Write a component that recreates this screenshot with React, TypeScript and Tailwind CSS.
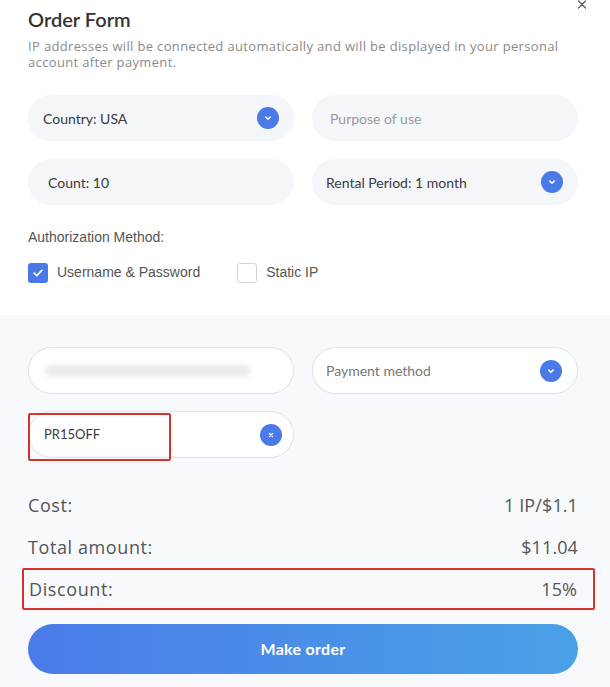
import React from "react";

const Chevron = () => (
  <span className="flex h-[22px] w-[22px] items-center justify-center rounded-full bg-[#4a79e8]">
    <svg width="10" height="10" viewBox="0 0 10 10" fill="none">
      <path d="M2.8 4 L5 6.2 L7.2 4" stroke="white" strokeWidth="1.6" strokeLinecap="round" strokeLinejoin="round" />
    </svg>
  </span>
);

const ClearIcon = () => (
  <span className="flex h-[22px] w-[22px] items-center justify-center rounded-full bg-[#4a79e8]">
    <svg width="10" height="10" viewBox="0 0 10 10" fill="none">
      <path d="M3.4 3.4 L6.6 6.6 M6.6 3.4 L3.4 6.6" stroke="white" strokeWidth="1.4" strokeLinecap="round" />
    </svg>
  </span>
);

export default function App() {
  const font = { fontFamily: "Lato, 'Noto Sans', sans-serif" };
  const arial = { fontFamily: "'Liberation Sans', Arial, sans-serif" };
  const open = { fontFamily: "'Open Sans', Lato, sans-serif" };
  return (
    <div className="w-[610px] h-[687px] bg-white overflow-hidden text-[#333]" style={font}>
      <div className="relative pl-[28px] pr-[32px] pt-[6px] pb-[32px]">
        <svg className="absolute right-[23px] top-[0px]" width="10" height="10" viewBox="0 0 10 10" fill="none">
          <path d="M1.5 1 L8.5 8 M8.5 1 L1.5 8" stroke="#555" strokeWidth="1.2" strokeLinecap="round" />
        </svg>
        <h1 className="text-[20px] font-semibold leading-[26px] text-[#333]">Order Form</h1>
        <p className="mt-[6px] text-[13px] leading-[16px] tracking-[0.35px] text-[#8a8a8a] pr-[10px]" style={open}>
          IP addresses will be connected automatically and will be displayed in your personal account after payment.
        </p>
        <div className="mt-[25px] grid grid-cols-2 gap-x-[18px] gap-y-[18px]">
          <div className="flex h-[46px] items-center justify-between rounded-full bg-[#f5f6fa] pl-[15px] pr-[15px] shadow-[0_0_3px_rgba(0,0,0,0.03)]">
            <span className="text-[14px] text-[#3a3a3a]">Country: USA</span>
            <Chevron />
          </div>
          <div className="flex h-[46px] items-center rounded-full bg-[#f5f6fa] pl-[18px]">
            <span className="text-[14px] text-[#9a9a9a]">Purpose of use</span>
          </div>
          <div className="flex h-[46px] items-center rounded-full bg-[#f5f6fa] pl-[20px]">
            <span className="text-[14px] text-[#3a3a3a]">Count: 10</span>
          </div>
          <div className="flex h-[46px] items-center justify-between rounded-full bg-[#f5f6fa] pl-[14px] pr-[15px]">
            <span className="text-[14px] text-[#3a3a3a]">Rental Period: 1 month</span>
            <Chevron />
          </div>
        </div>
        <div className="mt-[24px] text-[14px] leading-[16px] text-[#555]" style={arial}>
          Authorization Method:
        </div>
        <div className="mt-[17px] flex items-center text-[14px] text-[#555]" style={arial}>
          <span className="flex h-[20px] w-[20px] items-center justify-center rounded-[3px] bg-[#4a79e8]">
            <svg width="12" height="12" viewBox="0 0 12 12" fill="none">
              <path d="M2.2 6.2 L4.8 8.7 L9.8 3.4" stroke="white" strokeWidth="1.7" strokeLinecap="round" strokeLinejoin="round" />
            </svg>
          </span>
          <span className="ml-[9px]">Username &amp; Password</span>
          <span className="ml-[37px] h-[20px] w-[20px] rounded-[3px] border border-[#cfd2d8] bg-white" />
          <span className="ml-[9px]">Static IP</span>
        </div>
      </div>
      <div className="bg-[#f8f9fd] pl-[28px] pr-[32px] pt-[32px] pb-[20px]">
        <div className="grid grid-cols-2 gap-x-[18px] gap-y-[17px]">
          <div className="flex h-[47px] items-center rounded-full border border-[#dfe2e9] bg-white pl-[16px]">
            <span className="h-[12px] w-[206px] rounded-full bg-[#ececef] blur-[2px]" />
          </div>
          <div className="flex h-[47px] items-center justify-between rounded-full border border-[#dfe2e9] bg-white pl-[13px] pr-[15px]">
            <span className="text-[14px] text-[#777]">Payment method</span>
            <Chevron />
          </div>
          <div className="relative flex h-[47px] items-center justify-between rounded-full border border-[#dfe2e9] bg-white pl-[15px] pr-[11px]">
            <span className="text-[13px] text-[#3a3a3a]">PR15OFF</span>
            <ClearIcon />
            <span className="absolute left-[-1px] top-[1px] h-[48px] w-[143px] border-2 border-[#d9302b] rounded-[2px]" />
          </div>
        </div>
        <div className="mt-[35px] flex items-center justify-between text-[18px] leading-[24px] text-[#555]" style={open}>
          <span className="tracking-[0.6px]">Cost:</span>
          <span className="tracking-[0.1px]">1 IP/$1.1</span>
        </div>
        <div className="mt-[18px] flex items-center justify-between text-[18px] leading-[24px] text-[#555]" style={open}>
          <span className="tracking-[0.6px]">Total amount:</span>
          <span className="tracking-[0.1px]">$11.04</span>
        </div>
        <div className="ml-[-6px] mr-[-17px] mt-[9px] flex h-[42px] items-center justify-between rounded-[2px] border-2 border-[#d9302b] pl-[5px] pr-[16px] text-[18px] text-[#555]" style={open}>
          <span className="tracking-[0.6px]">Discount:</span>
          <span className="tracking-[0.1px]">15%</span>
        </div>
        <button className="mt-[14px] flex h-[50px] w-full items-center justify-center rounded-full bg-gradient-to-r from-[#4a7be9] to-[#4aa1e6] text-[16px] font-bold tracking-[0.3px] text-white">
          Make order
        </button>
      </div>
    </div>
  );
}
